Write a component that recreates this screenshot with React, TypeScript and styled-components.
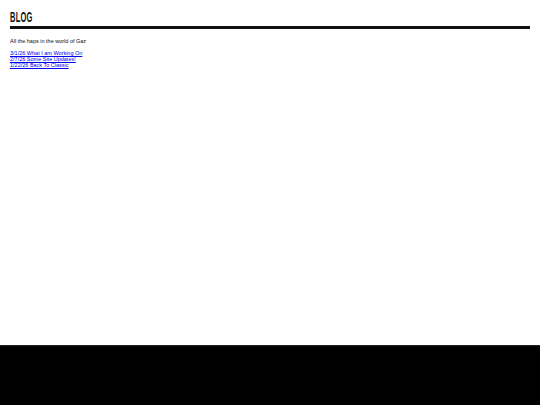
import React from 'react';
import styled, { createGlobalStyle } from 'styled-components';

const GlobalStyle = createGlobalStyle`
  html, body {
    margin: 0;
    padding: 0;
    background: #fff;
  }
  body {
    font-family: "Liberation Sans", Arial, sans-serif;
  }
`;

const Page = styled.div`
  min-height: 100vh;
  display: flex;
  flex-direction: column;
`;

const Main = styled.main`
  flex: 1;
  padding: 8px 10px 0 10px;
`;

const Title = styled.h1`
  margin: 0;
  padding-bottom: 1px;
  font-size: 15px;
  line-height: 17px;
  font-weight: 700;
  color: #111;
  border-bottom: 3px solid #111;
`;

// condensed display face stand-in
const TitleText = styled.span`
  display: inline-block;
  font-family: "Liberation Sans", Arial, sans-serif;
  transform: scaleX(0.5);
  transform-origin: left center;
  letter-spacing: 0.5px;
`;

const Intro = styled.p`
  margin: 9px 0 6px 0;
  font-size: 5.5px;
  line-height: 6px;
  color: #111;
`;

const PostList = styled.ul`
  list-style: none;
  margin: 0;
  padding: 0;
`;

const PostItem = styled.li`
  font-size: 5.5px;
  line-height: 6px;
`;

const PostLink = styled.a`
  color: #0000ee;
  text-decoration: underline;
`;

const Footer = styled.footer`
  height: 59px;
  background: #000;
  border-top: 1px solid #222;
`;

const posts = [
  '3/1/26 What I am Working On',
  '2/7/26 Some Site Updates!',
  '1/22/26 Back To Classic',
];

export default function App() {
  return (
    <>
      <GlobalStyle />
      <Page>
        <Main>
          <Title>
            <TitleText>BLOG</TitleText>
          </Title>
          <Intro>All the haps in the world of Gaz</Intro>
          <PostList>
            {posts.map((p) => (
              <PostItem key={p}>
                <PostLink href="#">{p}</PostLink>
              </PostItem>
            ))}
          </PostList>
        </Main>
        <Footer />
      </Page>
    </>
  );
}
